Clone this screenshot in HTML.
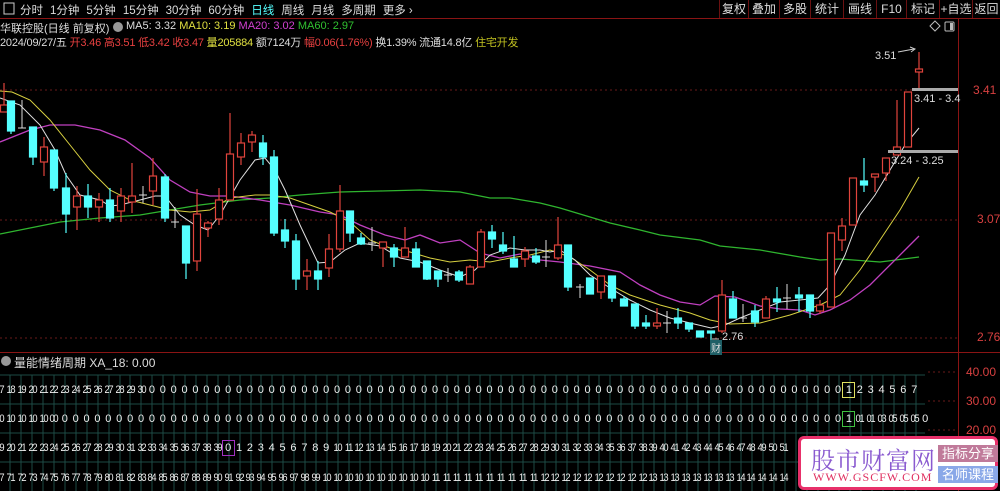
<!DOCTYPE html>
<html><head><meta charset="utf-8"><style>
*{margin:0;padding:0;box-sizing:border-box}
body{width:1000px;height:491px;background:#000;overflow:hidden;position:relative;font-family:"Liberation Sans","Noto Sans CJK SC",sans-serif;color:#ddd;font-size:12px}
.a{position:absolute;white-space:nowrap}
.tb span{margin-right:7px}
.rb{position:absolute;top:0;height:18px;border-left:1px solid #6a1010;color:#ddd;text-align:center;line-height:18px;font-size:12px}
.row{position:absolute;left:-6px;display:flex;font-size:11px;color:#eee;height:14px;line-height:14px}
.row span{width:10.9px;text-align:center;display:inline-block;overflow:visible}
.row span.d{letter-spacing:-1.5px;transform:scaleX(.85)}
</style></head><body>
<svg class="a" style="left:0;top:0" width="1000" height="491">
<line x1="0" y1="18.5" x2="1000" y2="18.5" stroke="#8a1414"/>
<line x1="958.5" y1="18" x2="958.5" y2="491" stroke="#8a1414"/>
<line x1="0" y1="352.5" x2="1000" y2="352.5" stroke="#8a1414"/>
<g stroke="#6a1a1a" stroke-dasharray="2,3">
<line x1="0" y1="90" x2="958" y2="90"/><line x1="0" y1="220" x2="958" y2="220"/><line x1="0" y1="338" x2="958" y2="338"/>
<line x1="928" y1="372" x2="958" y2="372"/><line x1="928" y1="401" x2="958" y2="401"/><line x1="928" y1="430" x2="958" y2="430"/>
</g>
<g stroke="#1d4a45" stroke-width="1">
<line x1="0" y1="375" x2="925" y2="375"/><line x1="0" y1="404" x2="925" y2="404"/><line x1="0" y1="433" x2="925" y2="433"/><line x1="0" y1="462" x2="925" y2="462"/>
</g>
<g stroke="#1d4a45">
<path d="M10 375V491M21 375V491M32 375V491M43 375V491M54 375V491M65 375V491M76 375V491M87 375V491M98 375V491M109 375V491M120 375V491M130 375V491M141 375V491M152 375V491M163 375V491M174 375V491M185 375V491M196 375V491M207 375V491M218 375V491M229 375V491M240 375V491M251 375V491M261 375V491M272 375V491M283 375V491M294 375V491M305 375V491M316 375V491M327 375V491M338 375V491M349 375V491M360 375V491M370 375V491M381 375V491M392 375V491M403 375V491M414 375V491M425 375V491M436 375V491M447 375V491M458 375V491M469 375V491M480 375V491M490 375V491M501 375V491M512 375V491M523 375V491M534 375V491M545 375V491M556 375V491M567 375V491M578 375V491M589 375V491M599 375V491M610 375V491M621 375V491M632 375V491M643 375V491M654 375V491M665 375V491M676 375V491M687 375V491M698 375V491M709 375V491M719 375V491M730 375V491M741 375V491M752 375V491M763 375V491M774 375V491M785 375V491M796 375V491M807 375V491M818 375V491M829 375V491M839 375V491M850 375V491M861 375V491M872 375V491M883 375V491M894 375V491M905 375V491M916 375V491"/>
</g>
<polyline fill="none" stroke="#2fb52f" stroke-width="1.3" points="0,234 30,228 60,222 100,218 140,215 170,210 200,205 240,200 270,198 300,195 340,192 380,191 420,190 460,192 490,198 510,198 540,203 560,208 580,214 610,223 640,230 660,235 700,240 720,246 760,250 800,257 820,260 840,259 880,262 919,257"/>
<polyline fill="none" stroke="#c040c0" stroke-width="1.3" points="0,142 30,130 50,125 75,125 100,130 125,140 150,158 170,180 190,192 210,196 230,196 260,200 290,205 320,212 340,215 360,225 385,235 405,240 420,235 440,243 460,240 480,253 500,258 520,254 540,260 560,262 590,266 620,272 640,285 660,295 680,302 700,305 715,296 735,297 760,306 780,309 800,310 815,315 830,310 850,300 870,285 890,265 905,250 919,236"/>
<polyline fill="none" stroke="#d8d040" stroke-width="1" points="0,91 12,92 30,100 50,120 70,145 90,170 110,190 130,200 150,205 170,210 190,212 210,210 230,198 255,195 270,195 290,198 310,205 330,212 350,222 370,240 390,248 410,252 430,258 450,262 470,260 490,262 510,258 530,255 550,250 570,257 590,270 610,285 630,295 660,305 690,313 710,320 730,324 760,323 790,315 820,305 840,295 860,270 880,240 900,210 919,177"/>
<polyline fill="none" stroke="#e0e0e0" stroke-width="1" points="0,98 20,105 40,125 55,150 66,175 80,195 100,200 110,206 120,205 140,200 155,196 165,196 180,215 195,225 208,230 220,215 240,180 255,160 265,158 275,170 285,190 300,225 318,263 330,262 345,250 360,243 380,246 400,258 420,262 440,270 460,277 475,270 490,255 510,248 525,250 540,250 550,252 560,250 575,260 590,275 610,288 630,300 650,310 670,318 690,323 711,328 725,325 740,318 760,310 780,302 800,300 818,298 830,285 845,255 860,215 875,195 890,170 905,145 919,128"/>
<g stroke="#e0443c" fill="#000" stroke-width="1.2">
<path fill="none" d="M4 83V112M44 137V176M77 186V230M99 193V222M121 188V222M132 163V213M153 158V205M197 189V271M208 221V237M219 188V225M230 113V200M241 133V165M252 131V152M307 259V290M329 234V277M340 185V252M383 242V267M405 227V257M470 265V284M481 229V267M525 247V267M558 217V260M601 276V299M657 308V329M722 280V333M766 296V318M820 300V314M831 233V307M842 218V251M853 178V225M875 174V192M886 158V181M897 100V155M908 92V147M919 52V88"/>
<rect x="0.5" y="105" width="7" height="7"/><rect x="40.5" y="147" width="7" height="15"/><rect x="73.5" y="196" width="7" height="11"/><rect x="95.5" y="200" width="7" height="7"/><rect x="117.5" y="196" width="7" height="15"/><rect x="128.5" y="196" width="7" height="6"/><rect x="149.5" y="176" width="7" height="15"/><rect x="193.5" y="214" width="7" height="47"/><rect x="204.5" y="223" width="7" height="5"/><rect x="215.5" y="200" width="7" height="19"/><rect x="226.5" y="154" width="7" height="46"/><rect x="237.5" y="143" width="7" height="14"/><rect x="248.5" y="135" width="7" height="7"/><rect x="303.5" y="271" width="7" height="5"/><rect x="325.5" y="249" width="7" height="19"/><rect x="336.5" y="211" width="7" height="38"/><rect x="379.5" y="242" width="7" height="6"/><rect x="401.5" y="248" width="7" height="9"/><rect x="466.5" y="267" width="7" height="17"/><rect x="477.5" y="232" width="7" height="35"/><rect x="521.5" y="251" width="7" height="8"/><rect x="554.5" y="245" width="7" height="13"/><rect x="597.5" y="276" width="7" height="16"/><rect x="653.5" y="323" width="7" height="3"/><rect x="718.5" y="295" width="7" height="36"/><rect x="762.5" y="299" width="7" height="19"/><rect x="816.5" y="305" width="7" height="6"/><rect x="827.5" y="233" width="7" height="74"/><rect x="838.5" y="226" width="7" height="14"/><rect x="849.5" y="178" width="7" height="47"/><rect x="871.5" y="174" width="7" height="3"/><rect x="882.5" y="158" width="7" height="15"/><rect x="893.5" y="147" width="7" height="8"/><rect x="904.5" y="92" width="7" height="55"/><rect x="915.5" y="69" width="7" height="3"/>
</g>
<g stroke="#55ffff" fill="#55ffff" stroke-width="1.2">
<path fill="none" d="M11 101V134M33 127V165M54 150V191M66 173V233M88 184V218M110 188V222M165 174V222M186 226V279M263 135V165M274 150V236M285 219V248M296 234V290M318 261V290M350 211V242M361 233V245M394 244V267M416 242V267M427 261V280M438 271V287M459 270V282M492 225V248M503 232V254M514 236V267M536 248V264M568 245V291M590 278V294M612 276V302M624 296V306M635 304V329M646 315V329M678 308V329M689 323V332M700 331V337M711 331V346M733 291V318M755 305V327M777 287V312M799 287V312M810 295V318M864 158V192"/>
<rect x="7.5" y="101" width="7" height="30"/><rect x="29.5" y="127" width="7" height="30"/><rect x="50.5" y="150" width="7" height="38"/><rect x="62.5" y="188" width="7" height="26"/><rect x="84.5" y="196" width="7" height="11"/><rect x="106.5" y="200" width="7" height="18"/><rect x="161.5" y="177" width="7" height="41"/><rect x="182.5" y="226" width="7" height="37"/><rect x="259.5" y="143" width="7" height="14"/><rect x="270.5" y="157" width="7" height="76"/><rect x="281.5" y="230" width="7" height="11"/><rect x="292.5" y="241" width="7" height="38"/><rect x="314.5" y="271" width="7" height="8"/><rect x="346.5" y="211" width="7" height="22"/><rect x="357.5" y="238" width="7" height="6"/><rect x="390.5" y="248" width="7" height="9"/><rect x="412.5" y="249" width="7" height="18"/><rect x="423.5" y="261" width="7" height="18"/><rect x="434.5" y="271" width="7" height="8"/><rect x="455.5" y="272" width="7" height="8"/><rect x="488.5" y="232" width="7" height="7"/><rect x="499.5" y="245" width="7" height="6"/><rect x="510.5" y="259" width="7" height="8"/><rect x="532.5" y="256" width="7" height="6"/><rect x="564.5" y="245" width="7" height="42"/><rect x="586.5" y="278" width="7" height="16"/><rect x="608.5" y="276" width="7" height="22"/><rect x="620.5" y="299" width="7" height="7"/><rect x="631.5" y="304" width="7" height="22"/><rect x="642.5" y="323" width="7" height="3"/><rect x="674.5" y="318" width="7" height="5"/><rect x="685.5" y="323" width="7" height="6"/><rect x="696.5" y="331" width="7" height="6"/><rect x="707.5" y="331" width="7" height="2"/><rect x="729.5" y="299" width="7" height="19"/><rect x="751.5" y="311" width="7" height="11"/><rect x="773.5" y="299" width="7" height="3"/><rect x="795.5" y="295" width="7" height="3"/><rect x="806.5" y="295" width="7" height="16"/><rect x="860.5" y="181" width="7" height="4"/>
</g>
<g stroke="#ddd" stroke-width="1">
<path d="M22 100V128M18 128H26M143 186V203M139 195H147M175 207V228M171 222H179M372 227V251M368 243H376M448 268V282M444 275H452M546 240V267M542 257H550M580 284V298M576 287H584M667 311V333M663 323H671M743 304V322M739 318H747M787 284V309M783 298H791"/>
</g>
<rect x="912" y="88" width="46" height="3" fill="#aaa"/>
<rect x="888" y="150" width="70" height="3" fill="#aaa"/>
<path d="M898 52 L914 49" stroke="#ccc" fill="none"/><path d="M910 47 L915 49 L911 52" stroke="#ccc" fill="none"/>
<path d="M712 339 L719 339" stroke="#ccc"/>
<path d="M935 21 l5 5 l-5 5 l-5 -5z" stroke="#bbb" fill="none"/>
<rect x="945" y="22" width="9" height="9" rx="1" stroke="#bbb" fill="none"/><rect x="950" y="23" width="3" height="7" fill="#bbb"/>
<rect x="4" y="3" width="10" height="11" stroke="#ccc" fill="none"/>
<circle cx="118" cy="27" r="5" fill="#999"/>
<circle cx="6" cy="361" r="5" fill="#999"/>
</svg>

<div class="a tb" style="left:20px;top:2px;font-size:11.5px;color:#ddd"><span>分时</span><span>1分钟</span><span>5分钟</span><span>15分钟</span><span>30分钟</span><span>60分钟</span><span style="color:#5ff">日线</span><span>周线</span><span>月线</span><span>多周期</span><span>更多 ›</span></div>
<div class="rb" style="left:719px;width:29px">复权</div>
<div class="rb" style="left:748px;width:31px">叠加</div>
<div class="rb" style="left:779px;width:31px">多股</div>
<div class="rb" style="left:810px;width:33px">统计</div>
<div class="rb" style="left:843px;width:33px">画线</div>
<div class="rb" style="left:876px;width:30px">F10</div>
<div class="rb" style="left:906px;width:33px">标记</div>
<div class="rb" style="left:939px;width:33px">+自选</div>
<div class="rb" style="left:972px;width:28px">返回</div>

<div class="a" style="left:0;top:20px;font-size:11px;color:#ddd">华联控股(日线 前复权)</div>
<div class="a" style="left:126px;top:20px;font-size:11px"><span style="color:#ddd">MA5: 3.32</span> <span style="color:#e0e040">MA10: 3.19</span> <span style="color:#d040d0">MA20: 3.02</span> <span style="color:#30c030">MA60: 2.97</span></div>
<div class="a" style="left:0;top:34px;font-size:11px;color:#ddd;letter-spacing:-0.2px">2024/09/27/五 <span style="color:#e84040">开3.46 高3.51 低3.42 收3.47</span> <span style="color:#e0e040">量205884</span> 额7124万 <span style="color:#e84040">幅0.06(1.76%)</span> 换1.39% 流通14.8亿 <span style="color:#c0c020">住宅开发</span></div>

<div class="a" style="left:875px;top:50px;font-size:11px;color:#ddd">3.51</div>
<div class="a" style="left:914px;top:93px;font-size:11px;color:#ddd">3.41 - 3.4</div>
<div class="a" style="left:891px;top:155px;font-size:11px;color:#ddd">3.24 - 3.25</div>
<div class="a" style="left:722px;top:331px;font-size:11px;color:#ddd">2.76</div>
<div class="a" style="left:710px;top:340px;font-size:10px;color:#ddd;background:#1f5f66;padding:0 1px">财</div>
<div class="a" style="left:973px;top:83px;font-size:12px;color:#d84040">3.41</div>
<div class="a" style="left:977px;top:212px;font-size:12px;color:#d84040">3.07</div>
<div class="a" style="left:977px;top:330px;font-size:12px;color:#d84040">2.76</div>
<div class="a" style="left:966px;top:365px;font-size:12px;color:#d84040">40.00</div>
<div class="a" style="left:966px;top:394px;font-size:12px;color:#d84040">30.00</div>
<div class="a" style="left:966px;top:423px;font-size:12px;color:#d84040">20.00</div>

<div class="a" style="left:14px;top:354px;font-size:12px;color:#ddd">量能情绪周期 XA_18: 0.00</div>

<div class="row" style="top:383px"><span class="d">17</span><span class="d">18</span><span class="d">19</span><span class="d">20</span><span class="d">21</span><span class="d">22</span><span class="d">23</span><span class="d">24</span><span class="d">25</span><span class="d">26</span><span class="d">27</span><span class="d">28</span><span class="d">29</span><span class="d">30</span><span>0</span><span>0</span><span>0</span><span>0</span><span>0</span><span>0</span><span>0</span><span>0</span><span>0</span><span>0</span><span>0</span><span>0</span><span>0</span><span>0</span><span>0</span><span>0</span><span>0</span><span>0</span><span>0</span><span>0</span><span>0</span><span>0</span><span>0</span><span>0</span><span>0</span><span>0</span><span>0</span><span>0</span><span>0</span><span>0</span><span>0</span><span>0</span><span>0</span><span>0</span><span>0</span><span>0</span><span>0</span><span>0</span><span>0</span><span>0</span><span>0</span><span>0</span><span>0</span><span>0</span><span>0</span><span>0</span><span>0</span><span>0</span><span>0</span><span>0</span><span>0</span><span>0</span><span>0</span><span>0</span><span>0</span><span>0</span><span>0</span><span>0</span><span>0</span><span>0</span><span>0</span><span>0</span><span>0</span><span>0</span><span style="outline:1px solid #e0e060">1</span><span>2</span><span>3</span><span>4</span><span>5</span><span>6</span><span>7</span></div>
<div class="row" style="top:412px"><span class="d">10</span><span class="d">10</span><span class="d">10</span><span class="d">10</span><span class="d">10</span><span class="d">00</span><span>0</span><span>0</span><span>0</span><span>0</span><span>0</span><span>0</span><span>0</span><span>0</span><span>0</span><span>0</span><span>0</span><span>0</span><span>0</span><span>0</span><span>0</span><span>0</span><span>0</span><span>0</span><span>0</span><span>0</span><span>0</span><span>0</span><span>0</span><span>0</span><span>0</span><span>0</span><span>0</span><span>0</span><span>0</span><span>0</span><span>0</span><span>0</span><span>0</span><span>0</span><span>0</span><span>0</span><span>0</span><span>0</span><span>0</span><span>0</span><span>0</span><span>0</span><span>0</span><span>0</span><span>0</span><span>0</span><span>0</span><span>0</span><span>0</span><span>0</span><span>0</span><span>0</span><span>0</span><span>0</span><span>0</span><span>0</span><span>0</span><span>0</span><span>0</span><span>0</span><span>0</span><span>0</span><span>0</span><span>0</span><span>0</span><span>0</span><span>0</span><span>0</span><span>0</span><span>0</span><span>0</span><span>0</span><span style="outline:1px solid #40c040">1</span><span class="d">01</span><span class="d">01</span><span class="d">03</span><span class="d">05</span><span class="d">05</span><span class="d">05</span><span>0</span></div>
<div class="row" style="top:441px"><span class="d">19</span><span class="d">20</span><span class="d">21</span><span class="d">22</span><span class="d">23</span><span class="d">24</span><span class="d">25</span><span class="d">26</span><span class="d">27</span><span class="d">28</span><span class="d">29</span><span class="d">30</span><span class="d">31</span><span class="d">32</span><span class="d">33</span><span class="d">34</span><span class="d">35</span><span class="d">36</span><span class="d">37</span><span class="d">38</span><span class="d">39</span><span style="outline:1px solid #a030c0">0</span><span>1</span><span>2</span><span>3</span><span>4</span><span>5</span><span>6</span><span>7</span><span>8</span><span>9</span><span class="d">10</span><span class="d">11</span><span class="d">12</span><span class="d">13</span><span class="d">14</span><span class="d">15</span><span class="d">16</span><span class="d">17</span><span class="d">18</span><span class="d">19</span><span class="d">20</span><span class="d">21</span><span class="d">22</span><span class="d">23</span><span class="d">24</span><span class="d">25</span><span class="d">26</span><span class="d">27</span><span class="d">28</span><span class="d">29</span><span class="d">30</span><span class="d">31</span><span class="d">32</span><span class="d">33</span><span class="d">34</span><span class="d">35</span><span class="d">36</span><span class="d">37</span><span class="d">38</span><span class="d">39</span><span class="d">40</span><span class="d">41</span><span class="d">42</span><span class="d">43</span><span class="d">44</span><span class="d">45</span><span class="d">46</span><span class="d">47</span><span class="d">48</span><span class="d">49</span><span class="d">50</span><span class="d">51</span></div>
<div class="row" style="top:471px"><span class="d">77</span><span class="d">71</span><span class="d">72</span><span class="d">73</span><span class="d">74</span><span class="d">75</span><span class="d">76</span><span class="d">77</span><span class="d">78</span><span class="d">79</span><span class="d">80</span><span class="d">81</span><span class="d">82</span><span class="d">83</span><span class="d">84</span><span class="d">85</span><span class="d">86</span><span class="d">87</span><span class="d">88</span><span class="d">89</span><span class="d">90</span><span class="d">91</span><span class="d">92</span><span class="d">93</span><span class="d">94</span><span class="d">95</span><span class="d">96</span><span class="d">97</span><span class="d">98</span><span class="d">99</span><span class="d">10</span><span class="d">10</span><span class="d">10</span><span class="d">10</span><span class="d">10</span><span class="d">10</span><span class="d">10</span><span class="d">10</span><span class="d">10</span><span class="d">10</span><span class="d">11</span><span class="d">11</span><span class="d">11</span><span class="d">11</span><span class="d">11</span><span class="d">11</span><span class="d">11</span><span class="d">11</span><span class="d">11</span><span class="d">11</span><span class="d">12</span><span class="d">12</span><span class="d">12</span><span class="d">12</span><span class="d">12</span><span class="d">12</span><span class="d">12</span><span class="d">12</span><span class="d">12</span><span class="d">12</span><span class="d">13</span><span class="d">13</span><span class="d">13</span><span class="d">13</span><span class="d">13</span><span class="d">13</span><span class="d">13</span><span class="d">13</span><span class="d">14</span><span class="d">14</span><span class="d">14</span><span class="d">14</span><span class="d">14</span></div>

<div class="a" style="left:798px;top:436px;width:200px;height:54px;background:#fff;border:3px solid #e8306a;border-radius:6px">
<div class="a" style="left:10px;top:2px;font-size:24px;color:#8a5ad0;font-family:'Noto Serif CJK SC',serif;letter-spacing:1px">股市财富网</div>
<div class="a" style="left:12px;top:31px;font-size:12px;color:#e03060;font-family:'Liberation Serif',serif;letter-spacing:1px">WWW.GSCFW.COM</div>
<div class="a" style="left:137px;top:6px;width:60px;height:17px;background:#c07a9a;color:#fff;font-size:13px;text-align:center;line-height:17px">指标分享</div>
<div class="a" style="left:137px;top:27px;width:60px;height:17px;background:#8aa8e8;color:#fff;font-size:13px;text-align:center;line-height:17px">名师课程</div>
</div>
</body></html>
